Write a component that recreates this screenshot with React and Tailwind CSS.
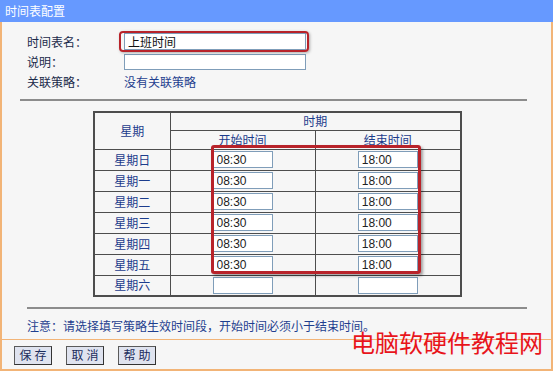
import React from 'react';

const days = ['星期日', '星期一', '星期二', '星期三', '星期四', '星期五', '星期六'];
const times = [
  ['08:30', '18:00'],
  ['08:30', '18:00'],
  ['08:30', '18:00'],
  ['08:30', '18:00'],
  ['08:30', '18:00'],
  ['08:30', '18:00'],
  ['', ''],
];

function TimeInput({ value }) {
  return (
    <input
      type="text"
      defaultValue={value}
      className="w-[60px] h-[17px] bg-white border border-[#7f9db9] px-[3px] text-[12px] text-[#222] font-['Liberation_Sans',sans-serif] outline-none"
    />
  );
}

export default function App() {
  return (
    <div className="relative w-[553px] h-[371px] overflow-hidden bg-[#f6f6f6] font-['Noto_Sans_CJK_SC',sans-serif] text-[12px] leading-none">
      {/* TITLE BAR */}
      <div className="h-[22px] bg-[#6699ff] text-white flex items-center pl-[5px] text-[12px]">
        时间表配置
      </div>

      {/* MAIN PANEL */}
      <div className="h-[317px] border-l-2 border-r-2 border-[#f2b477] flex flex-col">
        {/* FORM */}
        <div className="pt-[9px] pl-[25px] text-[#1a2a4a]">
          <div className="h-[21px] flex items-center">
            <span className="w-[97px]">时间表名：</span>
            <input
              type="text"
              defaultValue="上班时间"
              className="w-[182px] h-[17px] bg-white border border-[#7f9db9] px-[3px] text-[12px] text-[#111] outline-none"
            />
          </div>
          <div className="h-[20px] flex items-center">
            <span className="w-[97px]">说明：</span>
            <input
              type="text"
              className="w-[182px] h-[16px] bg-white border border-[#7f9db9] outline-none"
            />
          </div>
          <div className="h-[19px] flex items-center">
            <span className="w-[97px]">关联策略：</span>
            <span className="text-[#1f3f8f]">没有关联策略</span>
          </div>
        </div>

        <div className="mt-[8px] ml-[18px] w-[507px] h-[2px] bg-[#8c8c8c]"></div>

        {/* TABLE */}
        <div className="relative mt-[10px] ml-[91px]">
          <table className="border-collapse border-2 border-[#4d4d4d] text-[#1c3c8c] text-[12px]">
            <thead>
              <tr className="h-[18px]">
                <th rowSpan={2} className="w-[76px] border border-[#4d4d4d] font-normal">星期</th>
                <th colSpan={2} className="border border-[#4d4d4d] font-normal">时期</th>
              </tr>
              <tr className="h-[19px]">
                <th className="w-[145px] border border-[#4d4d4d] font-normal">开始时间</th>
                <th className="w-[146px] border border-[#4d4d4d] font-normal">结束时间</th>
              </tr>
            </thead>
            <tbody>
              {days.map((d, i) => (
                <tr key={d} className="h-[21px]">
                  <td className="border border-[#4d4d4d] text-center">{d}</td>
                  <td className="border border-[#4d4d4d] text-center align-middle">
                    <div className="flex justify-center">
                      <TimeInput value={times[i][0]} />
                    </div>
                  </td>
                  <td className="border border-[#4d4d4d] text-center align-middle">
                    <div className="flex justify-center">
                      <TimeInput value={times[i][1]} />
                    </div>
                  </td>
                </tr>
              ))}
            </tbody>
          </table>
          {/* red highlight over the filled rows */}
          <div className="absolute left-[118px] top-[34px] w-[210px] h-[129px] border-[3px] border-[#b8232a] rounded-[3px] shadow-[2px_2px_3px_rgba(0,0,0,0.35)] pointer-events-none"></div>
        </div>

        <div className="mt-[10px] ml-[25px] w-[500px] h-[2px] bg-[#8c8c8c]"></div>

        <div className="mt-[11px] ml-[25px] text-[#1f3f8f]">
          注意：请选择填写策略生效时间段，开始时间必须小于结束时间。
        </div>
      </div>

      {/* BOTTOM BAR */}
      <div className="h-[32px] border-t border-l-2 border-r-2 border-b-2 border-[#f2b477] flex items-center gap-[14px] pl-[12px] pt-[1px]">
        {['保存', '取消', '帮助'].map((b) => (
          <button
            key={b}
            type="button"
            className="w-[38px] h-[19px] bg-[#dfe3ef] border border-t-[#5a5a5a] border-l-[#5a5a5a] border-r-[#333] border-b-[#333] text-[#1c2c5c] text-[12px] tracking-[3px] pl-[3px]"
          >
            {b}
          </button>
        ))}
      </div>

      {/* red highlight around name input */}
      <div className="absolute left-[119px] top-[31px] w-[190px] h-[21px] border-[2px] border-[#b8232a] rounded-[4px] shadow-[1px_1px_3px_rgba(0,0,0,0.3)] pointer-events-none"></div>

      {/* WATERMARK */}
      <div className="absolute left-[351px] top-[330px] text-[#e8141b] text-[24px] font-['Noto_Sans_CJK_SC',sans-serif] leading-none">
        电脑软硬件教程网
      </div>
    </div>
  );
}
